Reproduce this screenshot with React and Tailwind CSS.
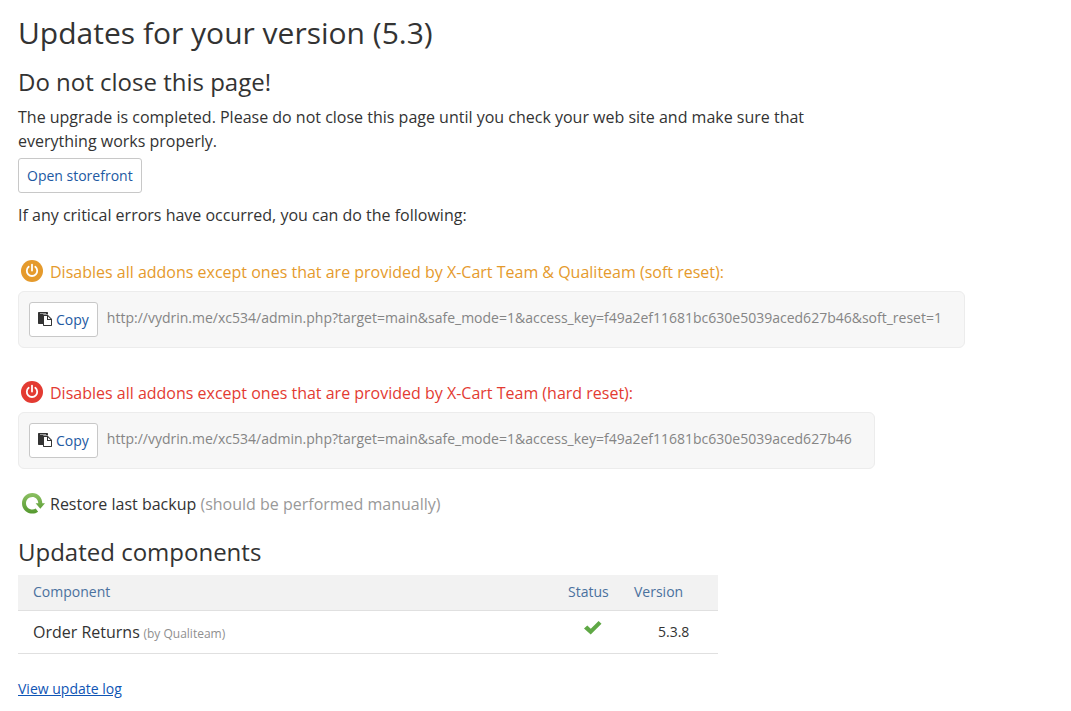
import React from "react";

function PowerIcon() {
  return (
    <svg viewBox="0 0 22 22" className="size-[22px] shrink-0" aria-hidden="true">
      <circle cx="11" cy="11" r="11" fill="currentColor" />
      <g fill="none" stroke="#fff" strokeWidth="1.800" strokeLinecap="round">
        <path d="M7.700 6.800a5.200 5.200 0 1 0 6.600 0" />
        <path d="M11 4.600v6" />
      </g>
    </svg>
  );
}

function RestoreIcon() {
  return (
    <svg viewBox="0 0 23 22" className="h-[22px] w-[23px] shrink-0" aria-hidden="true">
      <defs>
        <linearGradient id="restore-fill" x1="0" y1="0" x2="0" y2="1">
          <stop offset="0" stopColor="#8cc063" />
          <stop offset="1" stopColor="#55992f" />
        </linearGradient>
      </defs>
      <path
        fill="url(#restore-fill)"
        d="M10.3 0C16 0 20.2 4.500 20.300 10.300H23L18.300 15.800L13.600 10.300H16.300C16.200 6.700 13.600 4 10.300 4C6.800 4 4 6.800 4 10.300C4 13.800 6.800 16.500 10.300 16.500C11.600 16.500 12.700 16.100 13.700 15.500L16.100 18.700C14.500 19.900 12.500 20.600 10.300 20.600C4.600 20.600 0 16 0 10.300C0 4.600 4.600 0 10.300 0Z"
      />
    </svg>
  );
}

function PasteIcon() {
  return (
    <svg viewBox="0 0 14 14" className="mb-[2px] size-[14px] shrink-0 text-[#333]" aria-hidden="true">
      <path fill="currentColor" fillRule="evenodd" d="M.7 0H9.300Q10 0 10 .7V2.600H5.700Q5 2.600 5 3.300V12H.7Q0 12 0 11.300V.7Q0 0 .7 0ZM2 1V1.500H8V1Z" />
      <path fill="currentColor" fillRule="evenodd" d="M5 3H10L14 7V13.300Q14 14 13.300 14H5.700Q5 14 5 13.300ZM6 4V13H13V8H9V4ZM10 4.400V7H12.600Z" />
    </svg>
  );
}

function CheckIcon() {
  return (
    <svg viewBox="0 0 18 14" className="mx-auto block h-[14px] w-[18px]" role="img" aria-label="Updated">
      <path fill="#5fa845" d="M0 7.500L3.300 4.500L6.800 7.800L14.600 0L17.500 2.800L6.700 13.500Z" />
    </svg>
  );
}

function ActionButton({ children }) {
  return (
    <button
      type="button"
      className="flex h-[35px] shrink-0 cursor-pointer items-center gap-1 rounded-[3px] border border-[#c8c8c8] bg-white px-2 text-sm text-[#2259a2]"
    >
      {children}
    </button>
  );
}

function ResetOption({ title, url, color }) {
  return (
    <section className="mb-8">
      <h3 className={`flex h-6 items-center gap-[7px] pl-[3px] text-base ${color}`}>
        <PowerIcon />
        <span className="pt-[2px]">{title}</span>
      </h3>
      <div className="mt-2 flex h-[57px] w-fit items-center gap-[9px] rounded-md border border-[#ececec] bg-[#f7f7f7] pr-[22px] pl-[10px]">
        <ActionButton>
          <PasteIcon />
          Copy
        </ActionButton>
        <span className="pb-1 text-sm text-[#858585]">{url}</span>
      </div>
    </section>
  );
}

export default function App() {
  return (
    <main className="bg-white px-[18px] pt-3 pb-2 font-['Open_Sans',sans-serif] text-base leading-6 text-[#333]">
      <h1 className="text-[30px] leading-[42px]">Updates for your version (5.3)</h1>
      <h2 className="mt-3 text-2xl leading-8">Do not close this page!</h2>
      <p className="mt-[7px] max-w-[800px]">
        The upgrade is completed. Please do not close this page until you check your web site and make sure that
        everything works properly.
      </p>
      <div className="mt-[5px] flex">
        <ActionButton>Open storefront</ActionButton>
      </div>
      <p className="mt-[10px] mb-8">If any critical errors have occurred, you can do the following:</p>

      <ResetOption
        color="text-[#e59a2c]"
        title="Disables all addons except ones that are provided by X-Cart Team & Qualiteam (soft reset):"
        url="http://vydrin.me/xc534/admin.php?target=main&safe_mode=1&access_key=f49a2ef11681bc630e5039aced627b46&soft_reset=1"
      />
      <ResetOption
        color="text-[#e33b32]"
        title="Disables all addons except ones that are provided by X-Cart Team (hard reset):"
        url="http://vydrin.me/xc534/admin.php?target=main&safe_mode=1&access_key=f49a2ef11681bc630e5039aced627b46"
      />

      <p className="-mt-[9px] flex items-center gap-[5px] pl-1">
        <RestoreIcon />
        <span>
          Restore last backup <span className="text-[#999]">(should be performed manually)</span>
        </span>
      </p>

      <h2 className="mt-5 text-2xl leading-8">Updated components</h2>
      <table className="mt-[7px] w-full max-w-[700px] table-fixed border-collapse text-sm">
        <thead>
          <tr className="h-[35px] border-b border-[#e0e0e0] bg-[#f2f2f2] text-left text-[#4a719e]">
            <th className="pl-[15px] font-normal">Component</th>
            <th className="w-[76px] pl-[10px] font-normal">Status</th>
            <th className="w-[84px] font-normal">Version</th>
          </tr>
        </thead>
        <tbody>
          <tr className="h-[43px] border-b border-[#e0e0e0]">
            <td className="pl-[15px]">
              <span className="text-base">Order Returns</span>{" "}
              <span className="text-xs text-[#8f8f8f]">(by Qualiteam)</span>
            </td>
            <td className="pr-[6px] pb-2">
              <CheckIcon />
            </td>
            <td className="pl-6">5.3.8</td>
          </tr>
        </tbody>
      </table>
      <p className="mt-[23px] text-sm leading-6">
        <a href="#log" className="text-[#0f55b5] underline">
          View update log
        </a>
      </p>
    </main>
  );
}
